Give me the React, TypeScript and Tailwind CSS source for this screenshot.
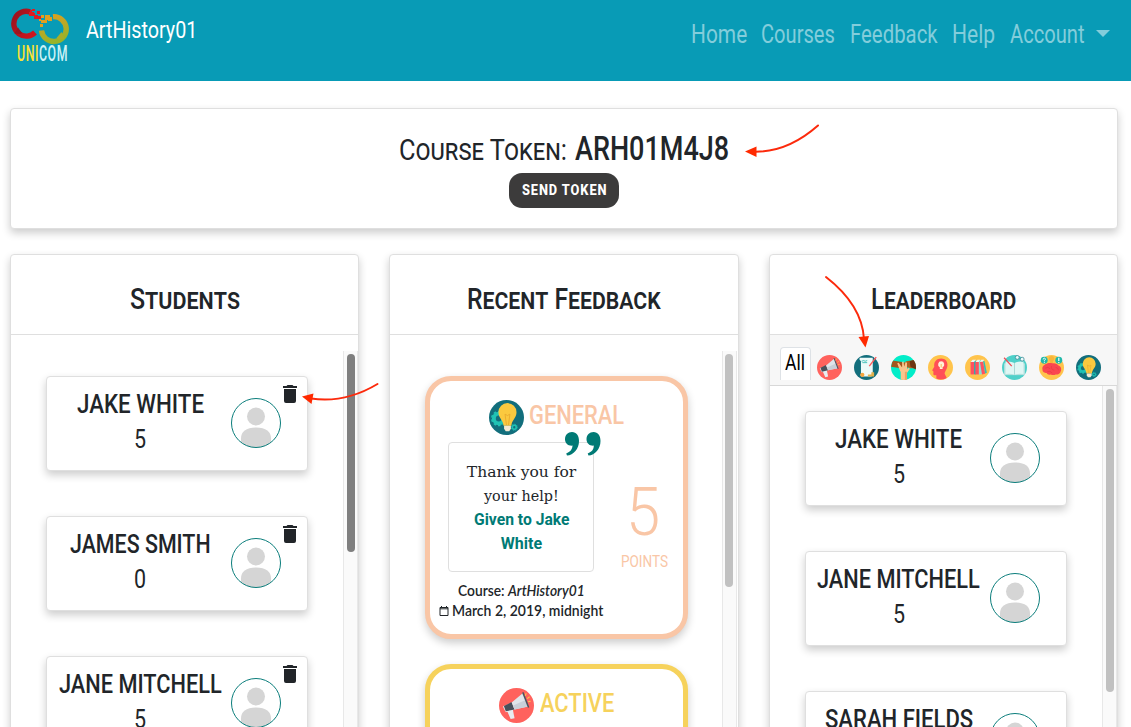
import { useLayoutEffect, useRef, type ReactNode } from "react";

/** Single line of text condensed or expanded to fill the width of its box. */
function Fit({ className, children }: { className: string; children: ReactNode }) {
  const outer = useRef<HTMLSpanElement>(null);
  const inner = useRef<HTMLSpanElement>(null);
  useLayoutEffect(() => {
    const fit = () => {
      const o = outer.current;
      const i = inner.current;
      if (o && i && i.offsetWidth) {
        i.style.transform = `scaleX(${o.clientWidth / i.offsetWidth})`;
      }
    };
    fit();
    document.fonts.ready.then(fit);
  }, []);
  return (
    <span ref={outer} className={`block shrink-0 whitespace-nowrap ${className}`}>
      <span ref={inner} className="inline-block origin-left align-top">
        {children}
      </span>
    </span>
  );
}

function Logo() {
  return (
    <div className="w-[58px] shrink-0">
      <svg width="58" height="37" viewBox="0 0 58 37" className="block">
        <defs>
          <linearGradient id="red" x1="0" y1="0" x2="1" y2="0.6">
            <stop offset="0" stopColor="#9a1420" />
            <stop offset="1" stopColor="#cc141e" />
          </linearGradient>
          <linearGradient id="gold" x1="0.2" y1="0" x2="0.5" y2="1">
            <stop offset="0" stopColor="#d8a022" />
            <stop offset="1" stopColor="#98b32a" />
          </linearGradient>
        </defs>
        <path d="M19 3.900A12.400 12.400 0 1 0 24 24.500" fill="none" stroke="url(#red)" strokeWidth="5.400" />
        <path d="M3.500 25.500L7 19.500L11 25L9.500 26Z" fill="#9a1420" />
        <path d="M42 8.700A12.400 12.400 0 1 1 30.500 22.500" fill="none" stroke="url(#gold)" strokeWidth="5.400" />
        <path d="M53.500 30.500L50.500 24L45.500 30L48 32Z" fill="#a9ae28" />
        <g fill="#e01b22">
          <path d="M18 4h5v4h-5zM23 7h4v4h-4zM21 5h3v3h-3zM26 3h3v3h-3zM21 1h3v2h-3zM27 8h3v3h-3zM19 2h2v2h-2z" />
        </g>
        <g fill="#e0a020">
          <path d="M34 7h5v5h-5zM30 12h4v3h-4zM37 9h4v4h-4zM30 7h3v3h-3zM33 12h3v3h-3zM29 16h3v3h-3zM28 11h2v2h-2z" />
        </g>
      </svg>
      <Fit className="ml-[6px] h-[18px] w-[51px] text-[22px] leading-[17px] font-medium tracking-[1px]">
        <span className="text-[#fde233]">UNI</span>
        <span className="text-[#cdf2f6]">COM</span>
      </Fit>
    </div>
  );
}

function Megaphone({ className }: { className: string }) {
  return (
    <svg viewBox="0 0 36 36" className={className}>
      <circle cx="18" cy="18" r="18" fill="#ff625d" />
      <path d="M8 23l6-2 2 10-4 1Z" fill="#e8edf0" />
      <path d="M4 19L13 15L16 22L7 25Z" fill="#e8edf0" />
      <path d="M5 18.500L13 14.500L16 22L7 24Z" fill="#48505a" />
      <path d="M13 15L25 5L30 19L16 22Z" fill="#dfe5ea" />
      <path d="M14.500 18L28 12L30 19L16 22Z" fill="#c8d0d8" />
      <path d="M24.500 4.500L30.500 20" stroke="#4b535d" strokeWidth="1.600" />
      <path d="M27 8l1-2.600M29 11l2.500-2M30 14l2.600-.3" stroke="#ffc34a" strokeWidth="1.100" />
    </svg>
  );
}

function Bulb({ className }: { className: string }) {
  return (
    <svg viewBox="0 0 36 36" className={className}>
      <circle cx="18" cy="18" r="18" fill="#126e7c" />
      <circle cx="10" cy="19" r="5" fill="none" stroke="#20c2b4" strokeWidth="4" />
      <circle cx="10" cy="19" r="7.200" fill="none" stroke="#20c2b4" strokeWidth="1.600" strokeDasharray="2.600 2.100" />
      <circle cx="26" cy="28" r="2" fill="none" stroke="#20c2b4" strokeWidth="1.600" />
      <circle cx="26" cy="28" r="3.100" fill="none" stroke="#20c2b4" strokeWidth="1" strokeDasharray="1.300 1.100" />
      <path d="M19 3.200a9.400 9.400 0 0 0-9.300 9.400c0 6 4.900 7.700 5.300 14h8c.4-6.300 5.300-8 5.300-14A9.400 9.400 0 0 0 19 3.200Z" fill="#fbc93f" />
      <path d="M16.500 14.500L18 26M21.500 14.500L20 26M16.500 14.500q2.500 3 5 0" stroke="#e8a92e" strokeWidth=".9" fill="none" />
      <path d="M15.500 26.500h7v3l-1.700 2.700h-3.600l-1.700-2.700Z" fill="#f5ead2" />
    </svg>
  );
}

function Scroll() {
  return (
    <svg viewBox="0 0 36 36" className="size-[25px]">
      <circle cx="18" cy="18" r="18" fill="#126e7c" />
      <path d="M8 4h19v25l-2 2H11c-2 0-2-3-1-4V9L8 7Z" fill="#eefaf9" />
      <path d="M11 9l3-1 2 1 3-1M12 11h7" stroke="#2bb9b0" strokeWidth="1.200" fill="none" />
      <path d="M32 3L22 16" stroke="#ff5c5c" strokeWidth="2" />
      <circle cx="12" cy="28.500" r="3" fill="#f5a63d" />
      <path d="M20 31h9v-6h-4v3h-5" fill="#e2b04a" />
    </svg>
  );
}

function Hands() {
  return (
    <svg viewBox="0 0 36 36" className="size-[25px]">
      <defs>
        <clipPath id="hands">
          <circle cx="18" cy="18" r="18" />
        </clipPath>
      </defs>
      <g clipPath="url(#hands)">
        <rect width="36" height="36" fill="#02edc9" />
        <path d="M2 8L16 10l3 5-5 4L0 17Z" fill="#a1561e" />
        <path d="M36 7L22 9l-6 4 4 4 8 2 8 0Z" fill="#ae6120" />
        <path d="M27 9l9-3v15l-8-4Z" fill="#6d3411" />
        <path d="M9 12l2-1 5 7 0-8 2-1 1 8 2-7 2 1 0 9 3-2 1 2-4 6v11h-9V25l-2-5Z" fill="#fcc58c" />
        <path d="M20 24h3v12h-3Z" fill="#e8a66a" />
      </g>
    </svg>
  );
}

function Head() {
  return (
    <svg viewBox="0 0 36 36" className="size-[25px]">
      <circle cx="18" cy="18" r="18" fill="#ffc44c" />
      <path d="M19 5c6 0 9 4 9 9 0 7-4 9-4 13l3 6a18 18 0 0 1-15 1v-5c-4 1-5-1-4-5l-2-2 3-5C8 10 12 5 19 5Z" fill="#ff4f57" />
      <path d="M19 9a4.500 4.500 0 0 0-2 8.500v2.500h4v-2.500A4.500 4.500 0 0 0 19 9Z" fill="#fff3d8" />
      <path d="M19 13v5" stroke="#f5b443" strokeWidth="1.200" />
    </svg>
  );
}

function Books() {
  return (
    <svg viewBox="0 0 36 36" className="size-[25px]">
      <circle cx="18" cy="18" r="18" fill="#ffc44c" />
      <path d="M8 10h5v18H8Z" fill="#ff5160" />
      <path d="M13 8h3v20h-3Z" fill="#39a9a8" />
      <path d="M15 10h5v18h-5Z" fill="#ff5160" />
      <path d="M20 8l2.500-1 3 20-2.500 1h-3Z" fill="#8adcd6" />
      <path d="M21.500 10l4.500-.7 3 17.700-4.500 1Z" fill="#ff5160" />
      <path d="M26 8.500l2 0 3.500 17-2.500 1Z" fill="#35bdb8" />
      <path d="M8 10l3-3h5l-3 3ZM15 10l3-3h4l-2 3ZM21.500 10l2-3h4l-1.500 2.300Z" fill="#e9f6f2" />
    </svg>
  );
}

function OpenBook() {
  return (
    <svg viewBox="0 0 36 36" className="size-[25px]">
      <circle cx="18" cy="18" r="18" fill="#4ed0c9" />
      <path d="M3 12h30v17H3Z" fill="#b5e0dd" />
      <path d="M5 9.500q8-1 13 2v17q-5-2-13-1ZM31 9.500q-8-1-13 2v17q5-2 13-1Z" fill="#e0f6f4" />
      <path d="M18 11.500v17" stroke="#9fd4d0" strokeWidth="1.200" />
      <path d="M3 4l11 12" stroke="#ef4b55" strokeWidth="1.800" />
      <circle cx="22" cy="3.500" r="2.800" fill="#e8fbfb" stroke="#2a7c8a" strokeWidth="1" />
      <circle cx="29" cy="6" r="2.800" fill="#e8fbfb" stroke="#2a7c8a" strokeWidth="1" />
    </svg>
  );
}

function Brain() {
  return (
    <svg viewBox="0 0 36 36" className="size-[25px]">
      <circle cx="18" cy="18" r="18" fill="#ffc44c" />
      <path d="M18 1.500a4 4 0 0 0-2 7.500v3h4V9A4 4 0 0 0 18 1.500Z" fill="#f9b53a" />
      <path d="M5 21c-1-5 3-7 5-8 2-2 7-2 9-1 4-1 8 1 9 3 4 1 5 6 3 9-1 4-5 4-7 4-2 1-5 1-7 0-3 1-5 0-6-2-3 0-6-1-6-5Z" fill="#fa474f" />
      <path d="M9 19q4-3 7 1M18 16q-1 5 4 6M24 18q4 0 4 4M12 24q4-2 7 2" stroke="#e93a45" strokeWidth="1.100" fill="none" />
      <circle cx="7.500" cy="7.500" r="5" fill="#20b8a8" />
      <circle cx="28.500" cy="7.500" r="5" fill="#20b8a8" />
      <path d="M6 6.500q0-2 1.700-2t1.500 2q-.3 1-1.500 1.300v1.400M7.700 10.100v1.300" stroke="#fff" strokeWidth="1.300" fill="none" />
      <path d="M28.500 4v4.700M28.500 9.900v1.500" stroke="#fff" strokeWidth="1.700" />
    </svg>
  );
}

function Avatar() {
  return (
    <svg width="50" height="50" viewBox="0 0 50 50" className="mt-[21px] shrink-0">
      <defs>
        <clipPath id="avatar">
          <circle cx="25" cy="25" r="24.500" />
        </clipPath>
      </defs>
      <circle cx="25" cy="25" r="24.500" fill="#fff" />
      <g fill="#d5d5d5" clipPath="url(#avatar)">
        <circle cx="25" cy="18.500" r="9" />
        <path d="M10 50V40.500C10 33.500 15 29.500 25 29.500S40 33.500 40 40.500V50Z" />
      </g>
      <circle cx="25" cy="25" r="24.500" fill="none" stroke="#0a7d7b" />
    </svg>
  );
}

function Trash() {
  return (
    <svg width="14" height="18" viewBox="0 0 14 18" className="absolute top-[8px] right-[10px]">
      <path d="M0 1h3.500l1-1h5l1 1H14v2H0ZM1 4h12v12a2 2 0 0 1-2 2H3a2 2 0 0 1-2-2Z" fill="#212529" />
    </svg>
  );
}

function PersonCard({ name, width, points, removable }: { name: string; width: string; points: string; removable?: boolean }) {
  return (
    <div className="relative mb-[45px] flex h-[95px] w-[262px] shrink-0 rounded border border-[#dfdfdf] bg-white pl-[11px] shadow-[0_4px_8px_0_rgba(0,0,0,0.2)]">
      <div className="mr-[9px] flex w-[164px] shrink-0 flex-col items-center pt-[8px]">
        <Fit className={`${width} h-[36px] text-[25.500px] leading-[38px] font-medium`}>{name}</Fit>
        <Fit className="h-[36px] w-[12px] text-[25px] leading-[38px]">{points}</Fit>
      </div>
      <Avatar />
      {removable && <Trash />}
    </div>
  );
}

function Scrollbar({ thumb, track }: { thumb: string; track: string }) {
  return (
    <div className={`flex w-[15px] shrink-0 justify-center border-x border-[#e8e8e8] bg-[#fafafa] pt-[3px] ${track}`}>
      <div className={`w-[8px] rounded-full ${thumb}`} />
    </div>
  );
}

function Column({ title, titleWidth, children }: { title: string; titleWidth: string; children: ReactNode }) {
  return (
    <section className="flex h-[520px] min-w-0 flex-col rounded border border-[#dfdfdf] bg-white shadow-[0_4px_8px_0_rgba(0,0,0,0.2)]">
      <header className="flex h-[80px] shrink-0 justify-center border-b border-[#dfdfdf]">
        <Fit className={`${titleWidth} h-[79px] text-[29.500px] leading-[89px] font-medium [font-variant-caps:small-caps]`}>{title}</Fit>
      </header>
      {children}
    </section>
  );
}

const tabs = [
  <Megaphone key="megaphone" className="size-[25px]" />,
  <Scroll key="scroll" />,
  <Hands key="hands" />,
  <Head key="head" />,
  <Books key="books" />,
  <OpenBook key="openbook" />,
  <Brain key="brain" />,
  <Bulb key="bulb" className="size-[25px]" />,
];

const links = [
  { label: "Home", width: "w-[56px]" },
  { label: "Courses", width: "w-[74px]" },
  { label: "Feedback", width: "w-[88px]" },
  { label: "Help", width: "w-[43px]" },
  { label: "Account", width: "w-[75px]" },
];

export default function App() {
  return (
    <div className="relative h-screen overflow-hidden bg-white font-['Roboto',sans-serif] text-[#212529]">
      <nav className="flex h-[81px] items-start bg-[#089bb6] pl-[11px] text-white">
        <div className="pt-[8px]">
          <Logo />
        </div>
        <Fit className="mt-[12px] ml-[17px] h-[36px] w-[111px] text-[24.500px] leading-[36px]">ArtHistory01</Fit>
        <div className="mt-[16px] mr-[21px] ml-auto flex gap-[14.500px] text-[25px] leading-[37px] text-[#83cddb]">
          {links.map((l) => (
            <Fit key={l.label} className={l.width}>
              {l.label}
            </Fit>
          ))}
          <svg width="14" height="7" viewBox="0 0 14 7" className="mt-[14px] -ml-[3px]">
            <path d="M0 0h14L7 7Z" fill="#83cddb" />
          </svg>
        </div>
      </nav>

      <main className="pt-[27px] pr-[13px] pl-[10px]">
        <section className="flex h-[121px] flex-col items-center rounded border border-[#dfdfdf] bg-white pt-[20px] shadow-[0_4px_8px_0_rgba(0,0,0,0.2)]">
          <div className="flex h-[44px] gap-[8px]">
            <Fit className="w-[168px] text-[29.500px] leading-[42px] [font-variant-caps:small-caps]">Course Token:</Fit>
            <Fit className="w-[154px] text-[33px] leading-[40px] font-medium">ARH01M4J8</Fit>
          </div>
          <button className="flex h-[35px] w-[110px] justify-center rounded-[13px] bg-[#3c3b3b] text-white">
            <Fit className="w-[85px] text-[14px] leading-[35px] font-extrabold tracking-[1px]">SEND TOKEN</Fit>
          </button>
        </section>

        <div className="mt-[25px] grid grid-cols-3 gap-[30px]">
          <Column title="Students" titleWidth="w-[110px]">
            <div className="flex grow justify-between pt-[16px]">
              <div className="pt-[25px] pl-[35px]">
                <PersonCard name="JAKE WHITE" width="w-[127px]" points="5" removable />
                <PersonCard name="JAMES SMITH" width="w-[141px]" points="0" removable />
                <PersonCard name="JANE MITCHELL" width="w-[163px]" points="5" removable />
              </div>
              <Scrollbar track="" thumb="h-[198px] bg-[#7f7f7f]" />
            </div>
          </Column>

          <Column title="Recent Feedback" titleWidth="w-[194px]">
            <div className="flex grow justify-between pt-[16px]">
              <div className="pt-[25px] pl-[35px]">
                <article className="mb-[25px] h-[263px] w-[263px] rounded-[26px] border-[5px] border-[#f9c6a6] bg-white pt-[19px] shadow-[0_4px_8px_0_rgba(0,0,0,0.2)]">
                  <div className="flex h-[42px] justify-center gap-[5px]">
                    <Bulb className="size-[35px]" />
                    <Fit className="h-[28px] w-[95px] text-[26px] leading-[30px] font-medium text-[#f9c6a6]">GENERAL</Fit>
                  </div>
                  <div className="flex">
                    <div className="relative ml-[18px] flex h-[130px] w-[146px] flex-col items-center rounded border border-[#dfdfdf] pt-[17px] leading-[24px]">
                      <Fit className="h-[24px] w-[109px] font-['DejaVu_Serif',serif] text-[15.500px]">Thank you for</Fit>
                      <Fit className="h-[24px] w-[75px] font-['DejaVu_Serif',serif] text-[15.500px]">your help!</Fit>
                      <Fit className="h-[24px] w-[95px] text-[16px] font-bold text-[#007a75]">Given to Jake</Fit>
                      <Fit className="h-[24px] w-[41px] text-[16px] font-bold text-[#007a75]">White</Fit>
                      <svg width="36" height="25" viewBox="0 0 36 25" className="absolute -top-[11px] -right-[8px]">
                        <path d="M7 0C11.500 0 14 3.500 14 9c0 8-5.500 14-12 14.600L1.200 21.500C5.300 20 7.300 17.600 7.500 13.600 3 14 0 11.200 0 7.200 0 3 3 0 7 0ZM28.500 0C33 0 35.500 3.500 35.500 9c0 8-5.500 14-12 14.600l-.8-2.100c4.100-1.500 6.100-3.900 6.300-7.900-4.500.4-7.500-2.400-7.500-6.400 0-4.200 3-7.200 7-7.200Z" fill="#007a75" />
                      </svg>
                    </div>
                    <div className="ml-[27px] flex flex-col items-center pt-[34px] text-[#f9c6a6]">
                      <Fit className="mr-[4px] h-[72px] w-[34px] text-[67px] leading-[73px] font-light">5</Fit>
                      <Fit className="h-[24px] w-[47px] text-[17px] leading-[26px]">POINTS</Fit>
                    </div>
                  </div>
                  <div className="mt-[9px] ml-[9px] flex w-[164px] flex-col items-center font-['Lato',sans-serif] text-[15px] leading-[18px] font-semibold">
                    <Fit className="h-[20px] w-[127px]">
                      Course: <em>ArtHistory01</em>
                    </Fit>
                    <div className="flex h-[20px] items-start gap-[3px]">
                      <svg width="10" height="10" viewBox="0 0 10 10" className="mt-[5px]">
                        <path d="M1 1.500h8v8H1ZM1 2.800h8M2.500 0v2M7.500 0v2" fill="none" stroke="#212529" />
                      </svg>
                      <Fit className="w-[151px]">March 2, 2019, midnight</Fit>
                    </div>
                  </div>
                </article>
                <article className="h-[263px] w-[263px] rounded-[26px] border-[5px] border-[#f6d25c] bg-white pt-[19px] shadow-[0_4px_8px_0_rgba(0,0,0,0.2)]">
                  <div className="flex justify-center gap-[6px]">
                    <Megaphone className="size-[35px]" />
                    <Fit className="h-[28px] w-[74px] text-[26px] leading-[30px] font-medium text-[#f6d25c]">ACTIVE</Fit>
                  </div>
                </article>
              </div>
              <Scrollbar track="mr-[1px]" thumb="h-[233px] bg-[#c1c1c1]" />
            </div>
          </Column>

          <Column title="Leaderboard" titleWidth="w-[145px]">
            <div className="flex h-[51px] shrink-0 border-b border-[#d8d8d8] bg-[#f7f7f7] pt-[12px] pl-[10px]">
              <div className="flex h-[33px] w-[31px] justify-center rounded-t border border-b-0 border-[#dee2e6] bg-white text-black">
                <Fit className="w-[20px] text-[22px] leading-[29px]">All</Fit>
              </div>
              <div className="ml-[6.500px] flex gap-[12px] pt-[8px]">{tabs}</div>
            </div>
            <div className="flex grow justify-between">
              <div className="pt-[25px] pl-[35px]">
                <PersonCard name="JAKE WHITE" width="w-[127px]" points="5" />
                <PersonCard name="JANE MITCHELL" width="w-[163px]" points="5" />
                <PersonCard name="SARAH FIELDS" width="w-[148px]" points="5" />
              </div>
              <Scrollbar track="" thumb="h-[303px] bg-[#c1c1c1]" />
            </div>
          </Column>
        </div>
      </main>

      <svg width="1131" height="727" viewBox="0 0 1131 727" className="pointer-events-none absolute inset-0" fill="none" stroke="#fc2a0c" strokeWidth="2" strokeLinecap="round">
        <path d="M818 125.500Q788 152 755 151.700" />
        <path d="M745 151.500L756.500 146.500V157Z" fill="#ff2a00" stroke="none" />
        <path d="M826 277Q862 305 864 339" />
        <path d="M865.500 347.500L858.500 337L869 336Z" fill="#ff2a00" stroke="none" />
        <path d="M377.500 384Q345 403.500 311 398.500" />
        <path d="M302 396.500L313.500 393.500L311.500 404Z" fill="#ff2a00" stroke="none" />
      </svg>
    </div>
  );
}
